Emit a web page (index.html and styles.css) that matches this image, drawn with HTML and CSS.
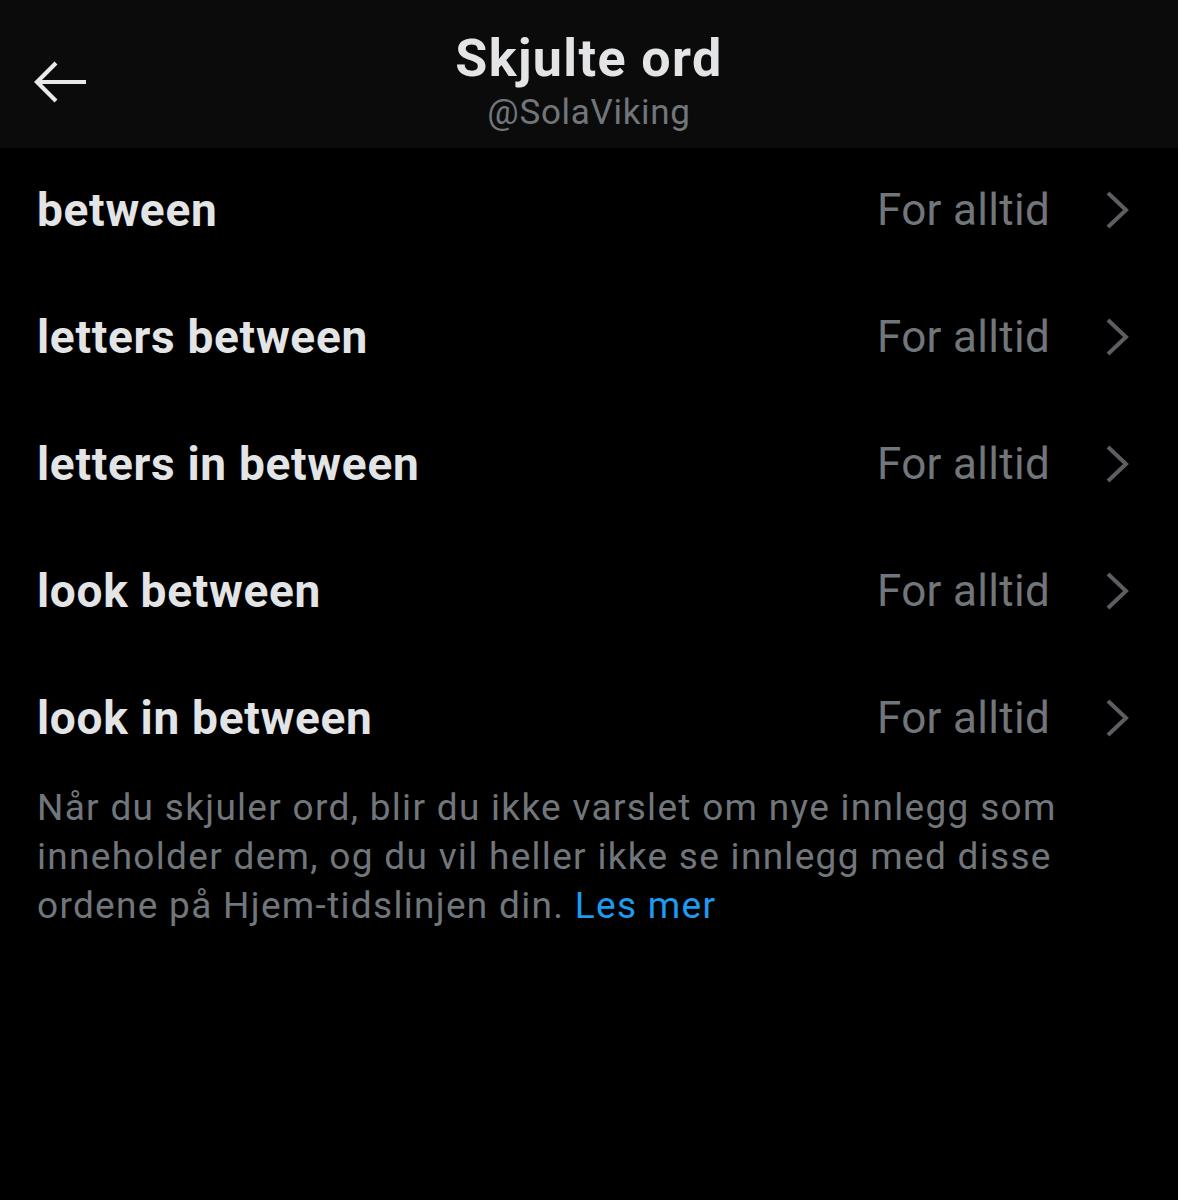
FILE: index.html
```html
<!DOCTYPE html>
<html lang="no">
<head>
<meta charset="utf-8">
<link rel="stylesheet" href="styles.css">
</head>
<body>
<header class="topbar">
  <div class="back">
    <svg width="54" height="44" viewBox="0 0 54 44"><path d="M52 22H4M22 3L3 22l19 19" fill="none" stroke="#e7e9ea" stroke-width="4.2" stroke-linecap="butt" stroke-linejoin="miter"/></svg>
  </div>
  <div class="titles">
    <div class="title">Skjulte ord</div>
    <div class="handle">@SolaViking</div>
  </div>
</header>
<main>
  <ul class="list">
    <li class="row"><span class="word">between</span><span class="dur">For alltid</span><span class="chev"><svg width="26" height="40" viewBox="0 0 26 40"><path d="M4 3l18 17L4 37" fill="none" stroke="#5b5f63" stroke-width="4"/></svg></span></li>
    <li class="row"><span class="word">letters between</span><span class="dur">For alltid</span><span class="chev"><svg width="26" height="40" viewBox="0 0 26 40"><path d="M4 3l18 17L4 37" fill="none" stroke="#5b5f63" stroke-width="4"/></svg></span></li>
    <li class="row"><span class="word">letters in between</span><span class="dur">For alltid</span><span class="chev"><svg width="26" height="40" viewBox="0 0 26 40"><path d="M4 3l18 17L4 37" fill="none" stroke="#5b5f63" stroke-width="4"/></svg></span></li>
    <li class="row"><span class="word">look between</span><span class="dur">For alltid</span><span class="chev"><svg width="26" height="40" viewBox="0 0 26 40"><path d="M4 3l18 17L4 37" fill="none" stroke="#5b5f63" stroke-width="4"/></svg></span></li>
    <li class="row"><span class="word">look in between</span><span class="dur">For alltid</span><span class="chev"><svg width="26" height="40" viewBox="0 0 26 40"><path d="M4 3l18 17L4 37" fill="none" stroke="#5b5f63" stroke-width="4"/></svg></span></li>
  </ul>
  <p class="note">Når du skjuler ord, blir du ikke varslet om nye innlegg som inneholder dem, og du vil heller ikke se innlegg med disse ordene på Hjem-tidslinjen din. <a class="link" href="#">Les mer</a></p>
</main>
</body>
</html>
```
FILE: styles.css
```css
html, body {
  margin: 0;
  padding: 0;
  background: #000;
}
body {
  font-family: Roboto, "Liberation Sans", sans-serif;
  color: #e7e9ea;
  width: 1178px;
  height: 1200px;
  overflow: hidden;
}
.topbar {
  height: 148px;
  background: #0b0b0b;
  display: flex;
  align-items: center;
  position: relative;
}
.back {
  position: absolute;
  left: 34px;
  top: 60px;
  width: 54px;
  height: 44px;
}
.back svg { display: block; }
.titles {
  flex: 1;
  display: flex;
  flex-direction: column;
  align-items: center;
  padding-top: 20px;
}
.title {
  font-weight: 700;
  font-size: 52px;
  line-height: 58px;
  letter-spacing: 1.4px;
  color: #e2e4e5;
}
.handle {
  font-size: 35px;
  line-height: 50px;
  letter-spacing: 0.7px;
  color: #71767b;
}
.list {
  list-style: none;
  margin: 0;
  padding: 0;
}
.row {
  height: 127px;
  display: flex;
  align-items: center;
  padding: 0 48px 4px 37px;
  box-sizing: border-box;
}
.word {
  flex: 1;
  font-weight: 700;
  font-size: 46px;
  letter-spacing: 0.7px;
  color: #e2e4e5;
}
.dur {
  font-size: 44px;
  letter-spacing: 0.3px;
  color: #71767b;
  margin-right: 54px;
}
.chev svg { display: block; }
.note {
  margin: 0;
  padding: 0 60px 0 37px;
  font-size: 37px;
  line-height: 49px;
  letter-spacing: 1.3px;
  color: #71767b;
}
.link {
  color: #1d9bf0;
  text-decoration: none;
}
```
